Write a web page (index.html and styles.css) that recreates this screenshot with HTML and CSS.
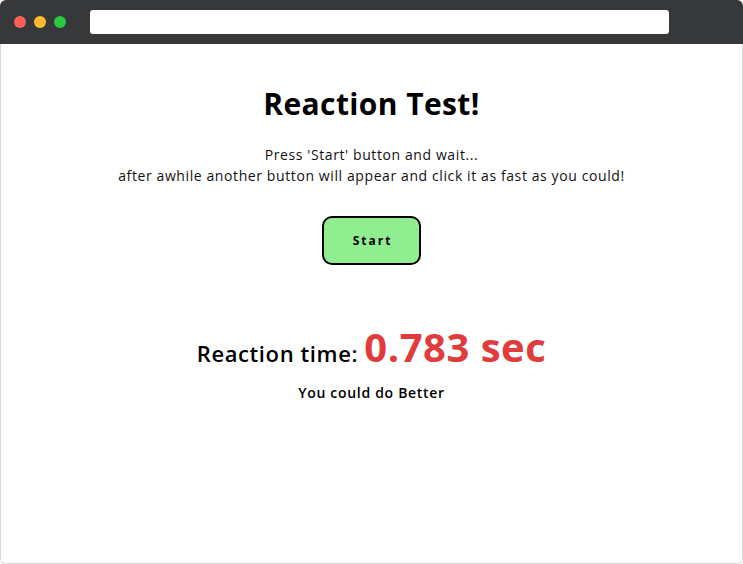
FILE: index.html
```html
<!DOCTYPE html>
<html>
<head>
<meta charset="utf-8">
<link rel="stylesheet" href="styles.css">
</head>
<body>
<div class="window">
  <div class="titlebar">
    <div class="dots">
      <span class="dot red"></span>
      <span class="dot yellow"></span>
      <span class="dot green"></span>
    </div>
    <div class="url"></div>
  </div>
  <div class="page">
    <h1 class="title">Reaction Test!</h1>
    <p class="desc">Press 'Start' button and wait...<br>after awhile another button will appear and click it as fast as you could!</p>
    <button class="start">Start</button>
    <div class="result">Reaction time: <span class="time">0.783 sec</span></div>
    <div class="verdict">You could do Better</div>
  </div>
</div>
</body>
</html>
```
FILE: styles.css
```css
html, body {
  margin: 0;
  padding: 0;
  background: #ffffff;
}
body {
  font-family: "Open Sans", "Liberation Sans", sans-serif;
  color: #000;
}
.window {
  width: 743px;
  height: 564px;
  display: flex;
  flex-direction: column;
  box-sizing: border-box;
}
.titlebar {
  height: 44px;
  background: #37383a;
  border-radius: 6px 6px 0 0;
  display: flex;
  align-items: center;
  padding: 0 0 0 14px;
  box-sizing: border-box;
}
.dots {
  display: flex;
  gap: 8px;
}
.dot {
  width: 12px;
  height: 12px;
  border-radius: 50%;
  display: block;
}
.red { background: #fe5f57; }
.yellow { background: #febc2e; }
.green { background: #28c840; }
.url {
  margin-left: 24px;
  width: 579px;
  height: 24px;
  background: #fff;
  border-radius: 3px;
}
.page {
  flex: 1;
  border: 1px solid #dadada;
  border-top: none;
  border-radius: 0 0 6px 6px;
  display: flex;
  flex-direction: column;
  align-items: center;
  text-align: center;
}
.title {
  margin: 40px 0 0;
  font-size: 30px;
  font-weight: 700;
  line-height: 40px;
  letter-spacing: 0.4px;
}
.desc {
  margin: 20px 0 0;
  font-size: 14px;
  line-height: 21px;
  color: #111;
  letter-spacing: 0.6px;
}
.start {
  margin-top: 30px;
  width: 99px;
  height: 49px;
  background: #90ee90;
  border: 2px solid #000;
  border-radius: 10px;
  font-family: inherit;
  font-size: 12px;
  font-weight: 700;
  letter-spacing: 2px;
  padding-left: 8px;
  color: #000;
}
.result {
  margin-top: 58px;
  font-size: 22px;
  font-weight: 600;
  line-height: 48px;
  letter-spacing: 0.6px;
}
.time {
  color: #e03c3c;
  font-size: 40px;
  font-weight: 700;
  letter-spacing: 0.5px;
}
.verdict {
  margin-top: 6px;
  font-size: 14px;
  font-weight: 600;
  letter-spacing: 0.7px;
}
```
